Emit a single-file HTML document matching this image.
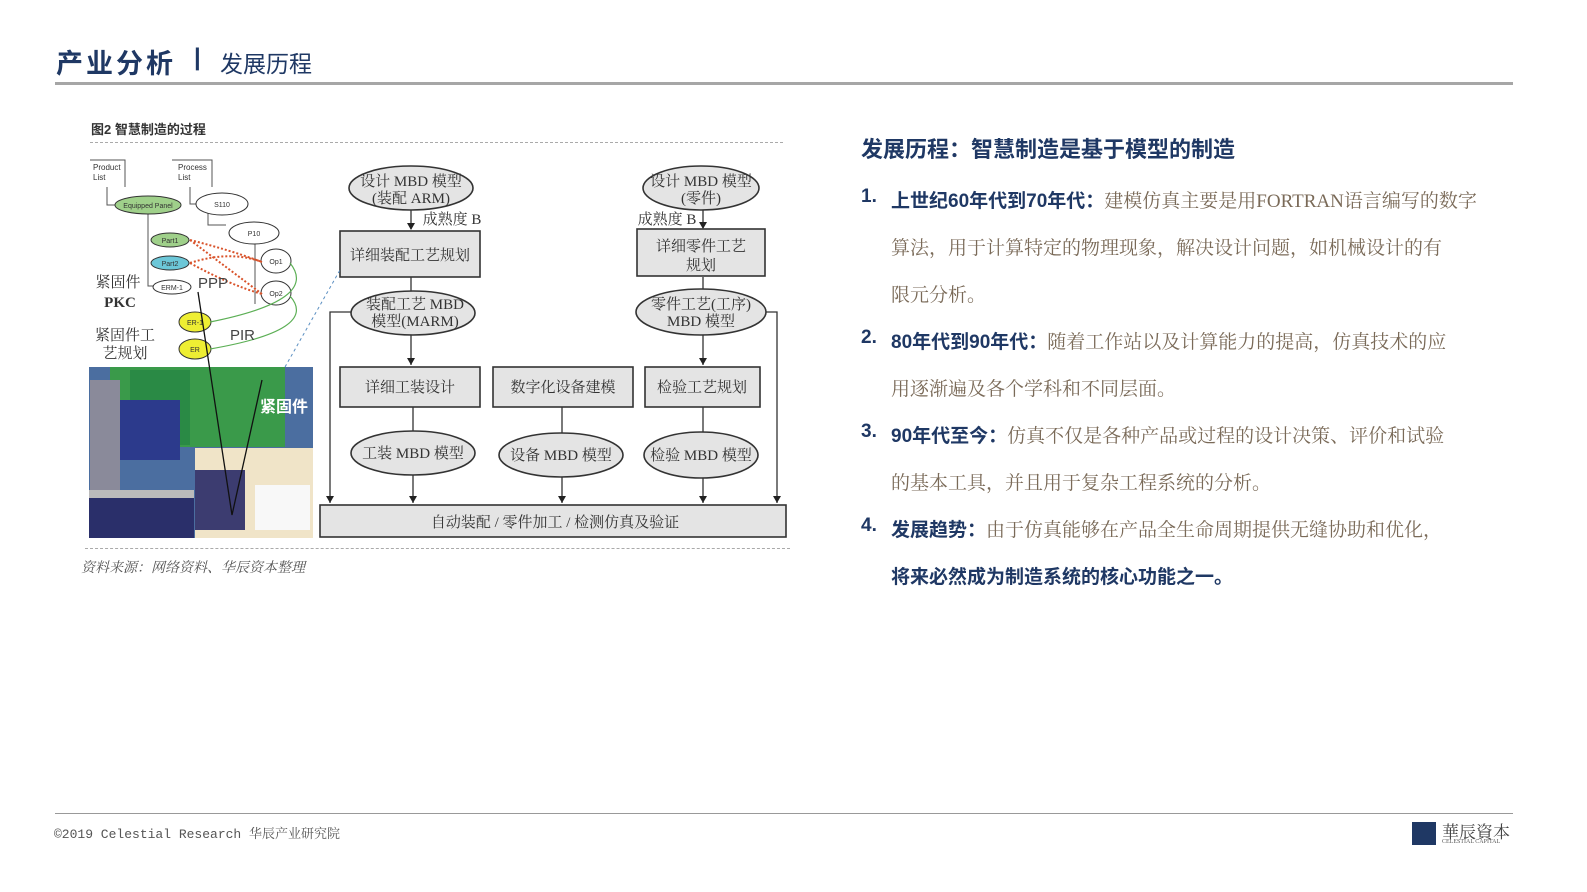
<!DOCTYPE html>
<html><head><meta charset="utf-8"><style>
*{margin:0;padding:0;box-sizing:border-box}
body{width:1587px;height:892px;background:#fff;position:relative;overflow:hidden;font-family:"Liberation Serif","Noto Serif CJK SC",serif}
.a{position:absolute;white-space:nowrap}
.h{font-family:"Liberation Sans","Noto Sans CJK SC",sans-serif;color:#1f3864}
.t{font-size:19px;color:#7a6a58;left:891px}
.t b{color:#1f3864;font-family:"Liberation Sans","Noto Sans CJK SC",sans-serif;font-weight:bold}
.n{left:861px;font-size:19px;color:#1f3864;font-weight:bold;font-family:"Liberation Sans",sans-serif}
</style></head><body>
<div class="a h" style="left:56px;top:42px;font-size:27px;font-weight:bold;letter-spacing:3px">产业分析</div>
<div class="a h" style="left:194px;top:44px;font-size:24px;font-weight:bold">|</div>
<div class="a h" style="left:220px;top:45px;font-size:23px">发展历程</div>
<div class="a" style="left:55px;top:82px;width:1458px;height:3px;background:#a6a6a6"></div>

<div class="a h" style="left:91px;top:119px;font-size:13px;font-weight:bold;color:#333">图2 智慧制造的过程</div>
<div class="a" style="left:90px;top:142px;width:693px;border-top:1px dashed #aaa"></div>
<div class="a" style="left:85px;top:548px;width:705px;border-top:1px dashed #aaa"></div>
<div class="a" style="left:81px;top:557px;font-size:14px;font-style:italic;color:#555">资料来源：网络资料、华辰资本整理</div>

<svg class="a" style="left:0;top:0" width="800" height="560" font-family="Liberation Serif,Noto Serif CJK SC,serif">
<defs><marker id="ar" markerWidth="8" markerHeight="8" refX="4" refY="7" orient="auto" markerUnits="userSpaceOnUse"><path d="M0,0 L8,0 L4,8z" fill="#222" transform="rotate(-90 4 4) rotate(90 4 4)"/></marker></defs>
<g stroke="#333" stroke-width="1.3" fill="none">
<path d="M411 210V229M703 210V228M411 277V292M411 335V365M703 277V290M703 335V365M413 407V431M562 407V433M703 407V432M413 475V503M562 477V503M703 478V503"/>
<path d="M352 312H330V503M766 312H777V503"/>
</g>
<g fill="#222">
<path d="M407 223h8l-4 7zM699 222h8l-4 7zM407 358h8l-4 7zM699 358h8l-4 7zM409 496h8l-4 7zM558 496h8l-4 7zM699 496h8l-4 7zM326 496h8l-4 7zM773 496h8l-4 7z"/>
</g>
<g fill="#e4e4e4" stroke="#333" stroke-width="1.6">
<ellipse cx="411" cy="188" rx="62" ry="22"/><ellipse cx="701" cy="188" rx="58" ry="22"/>
<ellipse cx="413" cy="313" rx="62" ry="22"/><ellipse cx="701" cy="312" rx="65" ry="23"/>
<ellipse cx="413" cy="453" rx="62" ry="22"/><ellipse cx="561" cy="455" rx="62" ry="22"/><ellipse cx="701" cy="455" rx="57" ry="23"/>
<rect x="340" y="231" width="140" height="46"/><rect x="637" y="229" width="128" height="47"/>
<rect x="340" y="367" width="140" height="40"/><rect x="493" y="367" width="140" height="40"/><rect x="645" y="367" width="115" height="40"/>
<rect x="320" y="505" width="466" height="32"/>
</g>
<g font-size="15" fill="#333" text-anchor="middle">
<text x="411" y="186">设计 MBD 模型</text><text x="411" y="203">(装配 ARM)</text>
<text x="701" y="186">设计 MBD 模型</text><text x="701" y="203">(零件)</text>
<text x="452" y="224">成熟度 B</text><text x="667" y="224">成熟度 B</text>
<text x="410" y="260">详细装配工艺规划</text>
<text x="701" y="251">详细零件工艺</text><text x="701" y="270">规划</text>
<text x="415" y="309">装配工艺 MBD</text><text x="415" y="326">模型(MARM)</text>
<text x="701" y="309">零件工艺(工序)</text><text x="701" y="326">MBD 模型</text>
<text x="410" y="392">详细工装设计</text><text x="563" y="392">数字化设备建模</text><text x="702" y="392">检验工艺规划</text>
<text x="413" y="458">工装 MBD 模型</text><text x="561" y="460">设备 MBD 模型</text><text x="701" y="460">检验 MBD 模型</text>
<text x="555" y="527">自动装配 / 零件加工 / 检测仿真及验证</text>
<text x="118" y="287">紧固件</text><text x="120" y="307" font-weight="bold">PKC</text>
<text x="125" y="340">紧固件工</text><text x="125" y="358">艺规划</text>
</g>
<!-- tree -->
<g stroke="#555" fill="none" stroke-width="1">
<path d="M90 160h35v27M107 187v18h10M172 160h40v27M190 187v17h10M208 210v15h18"/>
<path d="M148 214v72h12M255 244v60"/>
</g>
<g font-family="Liberation Sans,sans-serif" font-size="8" fill="#333">
<text x="93" y="170">Product</text><text x="93" y="180">List</text>
<text x="178" y="170">Process</text><text x="178" y="180">List</text>
</g>
<g stroke="#333" stroke-width="1">
<ellipse cx="148" cy="205" rx="33" ry="9" fill="#9fd08a"/>
<ellipse cx="222" cy="204" rx="26" ry="11" fill="#fff"/>
<ellipse cx="254" cy="233" rx="25" ry="11" fill="#fff"/>
<ellipse cx="170" cy="240" rx="19" ry="7" fill="#9fd08a"/>
<ellipse cx="170" cy="263" rx="19" ry="7" fill="#6cc7d8"/>
<ellipse cx="172" cy="287" rx="19" ry="7" fill="#fff"/>
<ellipse cx="276" cy="261" rx="15" ry="12" fill="#fff"/>
<ellipse cx="276" cy="293" rx="15" ry="12" fill="#fff"/>
<ellipse cx="195" cy="322" rx="16" ry="10" fill="#eeee33"/>
<ellipse cx="195" cy="349" rx="16" ry="10" fill="#eeee33"/>
</g>
<g font-family="Liberation Sans,sans-serif" font-size="7" fill="#333" text-anchor="middle">
<text x="148" y="208">Equipped Panel</text><text x="222" y="207">S110</text><text x="254" y="236">P10</text>
<text x="170" y="243">Part1</text><text x="170" y="266">Part2</text><text x="172" y="290">ERM-1</text>
<text x="276" y="264">Op1</text><text x="276" y="296">Op2</text><text x="195" y="325">ER-1</text><text x="195" y="352">ER</text>
</g>
<g stroke="#d9532b" stroke-width="2" stroke-dasharray="2 2" fill="none">
<path d="M190 240Q230 250 262 262M190 263Q230 250 262 262M190 240Q230 270 262 294M190 263Q230 285 262 294"/>
</g>
<g stroke="#5caf55" fill="none" stroke-width="1.2"><path d="M290 263Q320 300 210 322M290 296Q320 330 210 349"/></g>
<text x="198" y="288" font-family="Liberation Sans,sans-serif" font-size="15" fill="#444">PPP</text>
<text x="230" y="340" font-family="Liberation Sans,sans-serif" font-size="15" fill="#444">PIR</text>
<path d="M285 367L340 270" stroke="#5b8fc2" stroke-dasharray="3 3" fill="none"/>
<!-- screenshot -->
<rect x="89" y="367" width="224" height="171" fill="#4b6ea0"/>
<rect x="110" y="367" width="175" height="80" fill="#3a9a4a"/>
<rect x="130" y="370" width="60" height="75" fill="#2a8a45"/>
<rect x="90" y="380" width="30" height="110" fill="#8a8a9a"/>
<rect x="120" y="400" width="60" height="60" fill="#2c3a8c"/>
<rect x="195" y="448" width="118" height="90" fill="#f0e4c8"/>
<rect x="195" y="470" width="50" height="60" fill="#3c3c70"/>
<rect x="255" y="485" width="55" height="45" fill="#f8f8f8"/>
<rect x="89" y="490" width="105" height="48" fill="#2a2f6a"/>
<rect x="89" y="490" width="105" height="8" fill="#bbb"/>
<text x="260" y="412" font-size="16" fill="#fff" font-weight="bold" font-family="Noto Sans CJK SC,sans-serif">紧固件</text>
<path d="M198 292L232 515L262 380" stroke="#111" fill="none" stroke-width="1.3"/>
</svg>

<div class="a h" style="left:861px;top:132px;font-size:22px;font-weight:bold">发展历程：智慧制造是基于模型的制造</div>
<div class="a n" style="top:186px">1.</div>
<div class="a t" style="top:186px"><b>上世纪60年代到70年代：</b>建模仿真主要是用FORTRAN语言编写的数字</div>
<div class="a t" style="top:233px">算法，用于计算特定的物理现象，解决设计问题，如机械设计的有</div>
<div class="a t" style="top:280px">限元分析。</div>
<div class="a n" style="top:327px">2.</div>
<div class="a t" style="top:327px"><b>80年代到90年代：</b>随着工作站以及计算能力的提高，仿真技术的应</div>
<div class="a t" style="top:374px">用逐渐遍及各个学科和不同层面。</div>
<div class="a n" style="top:421px">3.</div>
<div class="a t" style="top:421px"><b>90年代至今：</b>仿真不仅是各种产品或过程的设计决策、评价和试验</div>
<div class="a t" style="top:468px">的基本工具，并且用于复杂工程系统的分析。</div>
<div class="a n" style="top:515px">4.</div>
<div class="a t" style="top:515px"><b>发展趋势：</b>由于仿真能够在产品全生命周期提供无缝协助和优化，</div>
<div class="a t" style="top:562px"><b>将来必然成为制造系统的核心功能之一。</b></div>

<div class="a" style="left:55px;top:813px;width:1458px;height:1px;background:#999"></div>
<div class="a" style="left:54px;top:823px;font-size:13px;color:#555;font-family:'Liberation Mono','Noto Serif CJK SC',monospace">©2019 Celestial Research 华辰产业研究院</div>
<div class="a" style="left:1412px;top:822px;width:24px;height:23px;background:#1f3864"></div>
<div class="a" style="left:1442px;top:818px;font-size:17px;color:#444">華辰資本</div>
<div class="a" style="left:1442px;top:839px;font-size:6px;color:#555">CELESTIAL CAPITAL</div>
</body></html>
